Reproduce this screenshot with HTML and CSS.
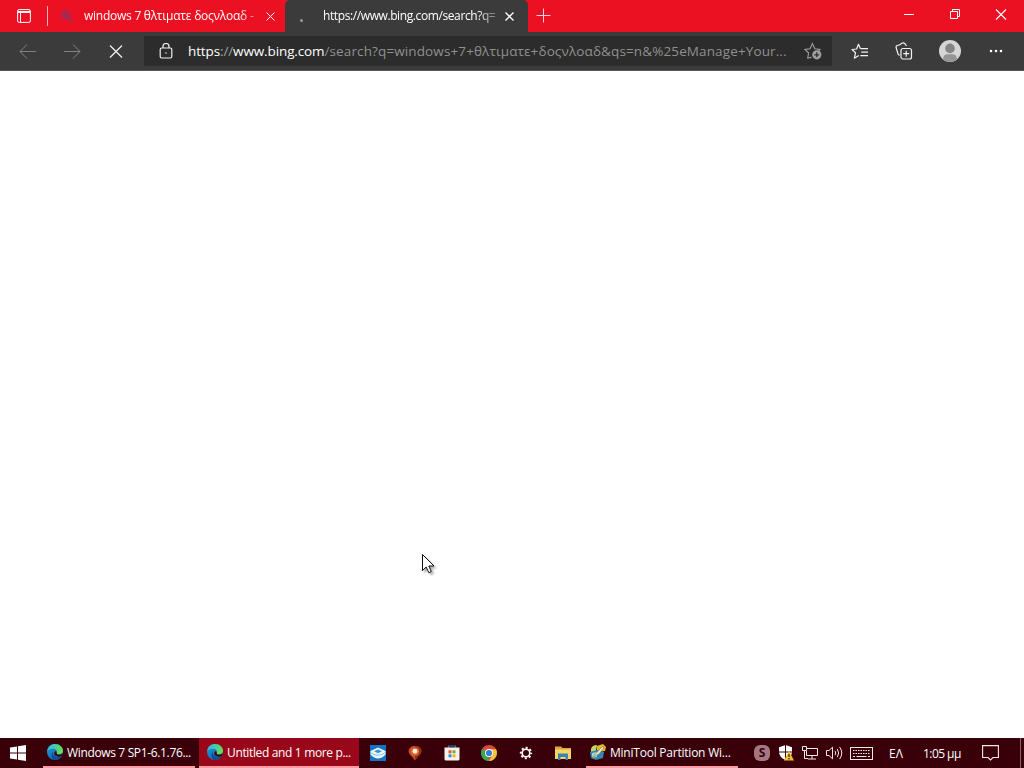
FILE: index.html
```html
<!DOCTYPE html>
<html lang="el">
<head>
  <meta charset="UTF-8" />
  <meta name="viewport" content="width=device-width, initial-scale=1" />
  <title>Untitled</title>
  <link rel="stylesheet" href="styles.css">
</head>
<body>
  <svg class="defs" width="0" height="0">
    <defs>
      <linearGradient id="edgeBlue" x1="0" y1="0" x2="1" y2="1">
        <stop offset="0" stop-color="#1b9de2" />
        <stop offset="1" stop-color="#0c59a4" />
      </linearGradient>
      <linearGradient id="edgeGreen" x1="0" y1="0" x2="1" y2="0.4">
        <stop offset="0" stop-color="#2bb8ec" />
        <stop offset="1" stop-color="#66dc58" />
      </linearGradient>
      <symbol id="edge" viewBox="0 0 16 16">
        <circle cx="8" cy="8" r="8" fill="url(#edgeBlue)" />
        <path d="M0.3 7C1 2.5 4.3 0 8.2 0C13 0 16 3.5 16 6.7C16 9.2 14 10.6 12 10.6C10.4 10.6 9.2 10 9.7 9.2C10.7 7.5 9.5 5 6.4 4.7C3.7 4.4 1.3 5.4 0.3 7Z" fill="url(#edgeGreen)" />
        <path d="M6.2 7.5C5 10 7 13.3 10.3 13.3C12 13.3 13.5 12.8 14.8 12C13 15 10 16 8 16C4.4 15.3 3.1 10.4 6.2 7.5Z" fill="#104a93" />
        <path d="M9.7 9.2C9.2 10 10.4 10.6 12 10.6C13.6 10.6 15 9.8 15.7 8.8L15.2 11.4C13.4 13 10 13.2 8.1 11.5C7 10.3 7 8.5 8 7.4C9.2 7.2 10 8.2 9.7 9.2Z" fill="#3b0610" />
      </symbol>
    </defs>
  </svg>

  <div class="tabs">
    <div class="tab-menu">
      <svg width="14" height="14" viewBox="0 0 14 14" fill="none" stroke="#fff">
        <rect x="0.6" y="0.6" width="12.8" height="12.8" rx="1.5" />
        <path d="M1 2.5H13M1 3.5H13M3.5 4V13" />
      </svg>
    </div>
    <div class="tab">
      <svg class="favicon" width="14" height="14" viewBox="0 0 14 14" fill="none" stroke="#7a3a78" stroke-width="2.2">
        <circle cx="6" cy="6" r="3.5" fill="#a02a50" />
        <path d="M8.5 8.5L12.5 12.5" />
      </svg>
      <span class="tab-title first-title">windows 7 θλτιματε δοςνλοαδ -</span>
      <svg class="tab-close" width="9" height="9" viewBox="0 0 9 9" stroke="#fff"><path d="M0.5 0.5L8.5 8.5M8.5 0.5L0.5 8.5" /></svg>
    </div>
    <div class="tab active">
      <span class="spinner"></span>
      <span class="tab-title second-title">https://www.bing.com/search?q=</span>
      <svg class="tab-close" width="9" height="9" viewBox="0 0 9 9" stroke="#fff" stroke-width="1.3"><path d="M0.5 0.5L8.5 8.5M8.5 0.5L0.5 8.5" /></svg>
    </div>
    <svg class="new-tab" width="15" height="15" viewBox="0 0 15 15" stroke="#ffd5d5"><path d="M0.5 7.5H14.5M7.5 0.5V14.5" /></svg>
    <div class="window-buttons">
      <svg width="46" height="30" viewBox="0 0 46 30" stroke="#fff"><path d="M18 14.5H28" /></svg>
      <svg width="46" height="30" viewBox="0 0 46 30" fill="none" stroke="#fff"><path d="M18.5 11.5H25.5V18.5H18.5ZM20.5 11.5V9.5H27.5V16.5H25.5" /></svg>
      <svg width="46" height="30" viewBox="0 0 46 30" stroke="#fff" stroke-width="1.1"><path d="M18 9.5L28 19.5M28 9.5L18 19.5" /></svg>
    </div>
  </div>

  <div class="toolbar">
    <svg width="44" height="39" viewBox="0 0 44 39" fill="none" stroke="#828282"><path d="M20 19.5H36M27 12.5L20 19.5L27 26.5" /></svg>
    <svg width="44" height="39" viewBox="0 0 44 39" fill="none" stroke="#828282"><path d="M20 19.5H36M29 12.5L36 19.5L29 26.5" /></svg>
    <svg width="56" height="39" viewBox="0 0 56 39" stroke="#f4f4f4" stroke-width="1.2"><path d="M22 13.5L34 25.5M34 13.5L22 25.5" /></svg>
    <div class="address">
      <svg class="lock" width="14" height="16" viewBox="0 0 14 16" fill="none" stroke="#f0f0f0" stroke-width="1.2">
        <rect x="1.2" y="5" width="11.6" height="10" rx="1.5" />
        <path d="M4 5V3.5A3 3 0 0 1 10 3.5V5" />
        <circle cx="7" cy="10" r="0.8" fill="#f0f0f0" stroke="none" />
      </svg>
      <div class="url"><span class="host">https<span class="slashes">://</span>www.bing.com</span><span class="path">/search?q=windows+7+θλτιματε+δοςνλοαδ&amp;qs=n&amp;%25eManage+Your...</span></div>
      <svg class="add-fav" width="18" height="18" viewBox="0 0 18 18" fill="none" stroke="#a0a0a0" stroke-width="1.1">
        <path d="M7.5 15.4L3.7 16L4.6 11L1 7.4L6 6.7L8.4 1.5L10.8 6.7L16 7.4L14.5 9" />
        <circle cx="12.8" cy="12.8" r="4.6" fill="#a0a0a0" stroke="none" />
        <path d="M10.3 12.8H15.3M12.8 10.3V15.3" stroke="#2d2e2d" stroke-width="1.2" />
      </svg>
    </div>
    <div class="tools">
      <svg width="18" height="17" viewBox="0 0 18 17" fill="none" stroke="#f1f1f1" stroke-width="1.2">
        <path d="M9.3 5.5L7.5 1.3L5.6 6L1 6.5L4.5 9.8L3.4 15.2L7.8 12.6" stroke-linejoin="round" />
        <path d="M9.3 5.7H17M10.3 9.2H17M9.3 12.7H17" />
      </svg>
      <svg width="18" height="18" viewBox="0 0 18 18" fill="none" stroke="#f1f1f1" stroke-width="1.2">
        <path d="M4.5 13.5L3 12L1.1 5.5Q0.8 4 2.2 3.5Q5 3.2 7 1.2Q8.5 0.5 10 1.8L11.5 3.8" />
        <rect x="6" y="6.5" width="10.5" height="10.5" rx="2" />
        <path d="M8.3 11.7H14.2M11.2 8.8V14.7" />
      </svg>
      <svg class="avatar" width="22" height="22" viewBox="0 0 22 22">
        <circle cx="11" cy="11" r="11" fill="#d6d6d6" />
        <circle cx="11" cy="8.4" r="4.8" fill="#858585" />
        <path d="M3.8 19.3Q4.5 14.5 8 14.3H14Q17.5 14.5 18.2 19.3Q15 22 11 22T3.8 19.3Z" fill="#969696" />
      </svg>
      <svg width="14" height="4" viewBox="0 0 14 4" fill="#fff"><circle cx="2" cy="2" r="1.3" /><circle cx="7" cy="2" r="1.3" /><circle cx="12" cy="2" r="1.3" /></svg>
    </div>
  </div>

  <div class="page"></div>

  <div class="taskbar">
    <div class="start">
      <svg width="17" height="16" viewBox="0 0 17 16" fill="#fff"><path d="M0 2.4L7 1.4V7.4H0ZM8 1.2L16 0V7.4H8ZM0 8.4H7V14.5L0 13.5ZM8 8.4H16V16L8 14.7Z" /></svg>
    </div>
    <div class="task windows-task">
      <svg width="16" height="16"><use href="#edge" /></svg>
      <span>Windows 7 SP1-6.1.76...</span>
    </div>
    <div class="task current">
      <svg width="16" height="16"><use href="#edge" /></svg>
      <span>Untitled and 1 more p...</span>
    </div>
    <div class="pinned">
      <svg width="16" height="16" viewBox="0 0 16 16">
        <path d="M0 0H16V16H0Z" fill="#1674c5" />
        <path d="M0.5 6L8 2.5L15.5 6V9.5Q12 13.5 8 13.5T0.5 9.5Z" fill="#e9f8ff" />
        <path d="M4 6.3L8 4.5L12 6.3L8 8.3Z" fill="#3c91ce" />
        <path d="M0.5 7.5Q8 13 15.5 7.5" fill="none" stroke="#6fb2df" stroke-width="0.8" />
      </svg>
      <svg width="16" height="16" viewBox="0 0 16 16">
        <path d="M8 1C4.3 1 1.6 3 1.6 6.2C1.6 9.6 6 11.5 8 15.5C10 11.5 14.4 9.6 14.4 6.2C14.4 3 11.7 1 8 1Z" fill="#c84b28" />
        <path d="M8 1C11.7 1 14.4 3 14.4 6.2C14.4 9.6 10 11.5 8 15.5Z" fill="#943018" />
        <circle cx="8" cy="6.5" r="4" fill="#e46b32" />
        <circle cx="8" cy="6.2" r="2.4" fill="#fff2e5" />
      </svg>
      <svg width="16" height="16" viewBox="0 0 16 16">
        <path d="M4.5 3V1H11.5V3" fill="none" stroke="#257d91" stroke-width="1.2" />
        <path d="M0.5 2.5H15.5V14Q15.5 15.5 14 15.5H2Q0.5 15.5 0.5 14Z" fill="#f7f1ee" />
        <path d="M4.5 5.3H7.5V8.3H4.5Z" fill="#e7572e" /><path d="M8.5 5.3H11.5V8.3H8.5Z" fill="#6caf32" />
        <path d="M4.5 9.3H7.5V12.3H4.5Z" fill="#2095d5" /><path d="M8.5 9.3H11.5V12.3H8.5Z" fill="#edb52d" />
      </svg>
      <svg width="16" height="16" viewBox="0 0 16 16">
        <circle cx="8" cy="8" r="8" fill="#da4938" />
        <path d="M1.1 4L8 8L8 16A8 8 0 0 1 1.1 4Z" fill="#37a852" />
        <path d="M8 4.2H15A8 8 0 0 1 8 16L11.4 10Z" fill="#f4c437" />
        <circle cx="8" cy="8" r="4" fill="#fff" /><circle cx="8" cy="8" r="3.1" fill="#3979d8" />
      </svg>
      <svg width="16" height="16" viewBox="0 0 16 16" fill="none" stroke="#fff">
        <circle cx="8" cy="8" r="3.8" stroke-width="1.6" />
        <circle cx="8" cy="8" r="5.2" stroke-width="2" stroke-dasharray="2 2.084" stroke-dashoffset="1" />
      </svg>
      <svg width="16" height="16" viewBox="0 0 16 16">
        <path d="M0 1.5H6L7.5 3H16V14H0Z" fill="#dba83a" />
        <path d="M0 4.5H16V14H0Z" fill="#f7d36d" />
        <path d="M3 8.5H13V15H10.5V12H5.5V15H3Z" fill="#3983ae" />
      </svg>
    </div>
    <div class="task mini-task">
      <svg width="16" height="16" viewBox="0 0 16 16">
        <path d="M1 5Q2 1 7 1L6 7L1 9Z" fill="#c3d768" />
        <path d="M7 2L13 0L16 3L15 7L7 8Z" fill="#e5b927" />
        <path d="M0 8L7 6L14 8L13 14L6 16L1 14Z" fill="#3584b1" />
        <path d="M2 9L7 8V13L2 14Z" fill="#a7d5da" />
        <path d="M2 14L9 6L13 2L14 4L9 10Z" fill="#e5ead2" stroke="#6a7830" stroke-width="0.6" />
      </svg>
      <span>MiniTool Partition Wi...</span>
    </div>
    <div class="tray">
      <span class="skype">S</span>
      <svg class="shield" width="16" height="16" viewBox="0 0 16 16">
        <path d="M7.5 0L14 2.2V7Q14 12 7.5 15Q1 12 1 7V2.2Z" fill="#fff" />
        <path d="M7.5 0V15M1 7H14" stroke="#3a0009" />
        <path d="M11 6L16 15.5H6Z" fill="#f1bd36" />
        <path d="M11 9V12M11 13V14.5" stroke="#422505" stroke-width="1.2" />
      </svg>
      <svg class="network" width="16" height="14" viewBox="0 0 16 14" fill="none" stroke="#f7e8e8">
        <path d="M5 2.5H15.5V9.5H4.5V5M10 10V13M6 13H14" />
        <path d="M0.5 0.5H4.5V4.5H0.5ZM2.5 5V12.5H6" />
      </svg>
      <svg class="sound" width="17" height="14" viewBox="0 0 17 14" fill="none" stroke="#f7e8e8">
        <path d="M0.5 4.5H3L6.5 1.2V12.8L3 9.5H0.5Z" />
        <path d="M9 4.8Q10.5 7 9 9.2M11.3 3Q14 7 11.3 11M13.6 1Q18 7 13.6 13" />
      </svg>
      <svg class="keyboard" width="23" height="13" viewBox="0 0 23 13" fill="none" stroke="#f7e8e8">
        <rect x="0.5" y="0.5" width="22" height="12" />
        <path d="M3 3.5H20M3 6.5H20" stroke-dasharray="1.5 1" />
        <path d="M3 9.5H5M6.5 9.5H16.5M18 9.5H20" />
      </svg>
      <span class="language">ΕΛ</span>
      <span class="clock">1:05 μμ</span>
      <svg class="notice" width="17" height="16" viewBox="0 0 17 16" fill="none" stroke="#f7e8e8" stroke-width="1.1"><path d="M0.6 0.6H16.4V12.5H11L8.5 15L6 12.5H0.6Z" /></svg>
      <span class="show-desktop"></span>
    </div>
  </div>

  <svg class="cursor" width="16" height="22" viewBox="0 0 16 22">
    <path d="M0.5 0.5V16.5L4.2 13L6.8 18.7L9.3 17.5L6.8 12H12Z" fill="#fff" stroke="#111" />
  </svg>
</body>
</html>
```
FILE: styles.css
```css
* {
  box-sizing: border-box;
}
body {
  margin: 0;
  height: 768px;
  overflow: hidden;
  display: flex;
  flex-direction: column;
  background: #fff;
  font-family: "Open Sans", "Noto Sans", sans-serif;
  font-size: 12px;
  color: #fff;
}
svg {
  flex: none;
  display: block;
}
.defs {
  position: absolute;
}
.tabs {
  height: 32px;
  flex: none;
  display: flex;
  background: #eb1022;
}
.tab-menu {
  width: 48px;
  height: 20px;
  margin-top: 6px;
  padding: 3px 0 0 17px;
  border-right: 1px solid #ffb0b0;
}
.tab {
  width: 237px;
  height: 32px;
  display: flex;
  align-items: center;
  padding-left: 12px;
}
.active {
  width: 243px;
  padding-left: 15px;
  background: #3b3b3b;
  border-radius: 5px 5px 0 0;
}
.favicon {
  opacity: 0.7;
}
.tab-title {
  white-space: nowrap;
  line-height: 20px;
}
.first-title {
  width: 172px;
  margin-left: 10px;
  margin-right: 10px;
  letter-spacing: -0.25px;
  -webkit-mask-image: linear-gradient(to right, #000 155px, #0006 172px);
  mask-image: linear-gradient(to right, #000 155px, #0006 172px);
}
.second-title {
  width: 173px;
  margin-left: 20px;
  margin-right: 9px;
  letter-spacing: -0.4px;
  -webkit-mask-image: linear-gradient(to right, #000 155px, #0004 173px);
  mask-image: linear-gradient(to right, #000 155px, #0004 173px);
}
.spinner {
  width: 3px;
  height: 3px;
  margin-top: 9px;
  border-radius: 50%;
  background: #999;
}
.new-tab {
  margin: 8px 0 0 8px;
}
.window-buttons {
  display: flex;
  margin-left: auto;
}
.toolbar {
  height: 39px;
  flex: none;
  display: flex;
  background: #3b3b3b;
  border-bottom: 1px solid #555;
}
.address {
  width: 688px;
  height: 30px;
  margin-top: 4px;
  display: flex;
  align-items: center;
  background: #2b2c2b;
}
.lock {
  margin-left: 15px;
}
.url {
  width: 602px;
  margin-left: 15px;
  font-size: 13.5px;
  line-height: 20px;
  white-space: nowrap;
}
.host {
  letter-spacing: -0.12px;
}
.slashes {
  color: #a0a0a0;
}
.path {
  color: #909090;
  letter-spacing: 0.12px;
}
.add-fav {
  margin-left: 14px;
}
.tools {
  display: flex;
  align-items: center;
  padding-left: 19px;
}
.tools svg:nth-child(2) {
  margin-left: 26px;
}
.avatar {
  margin-left: 26px;
}
.tools svg:last-child {
  margin-left: 28px;
}
.page {
  flex: 1;
}
.taskbar {
  height: 30px;
  flex: none;
  display: flex;
  background: #3a0009;
}
.start {
  width: 43px;
  padding: 7px 0 0 10px;
}
.task {
  width: 152px;
  display: flex;
  align-items: center;
  padding-left: 4px;
  border-bottom: 2px solid #ff9ba3;
  letter-spacing: -0.35px;
  white-space: nowrap;
}
.task span {
  margin-left: 4px;
}
.current {
  width: 160px;
  margin-left: 4px;
  padding-left: 8px;
  background: #99071a;
}
.mini-task {
  letter-spacing: -0.23px;
}
.pinned {
  width: 227px;
  display: flex;
  align-items: center;
  gap: 21px;
  padding-left: 11px;
}
.tray {
  flex: 1;
  display: flex;
  align-items: center;
}
.skype {
  width: 16px;
  height: 16px;
  margin-left: 16px;
  border-radius: 6px;
  background: #a67780;
  color: #3a0009;
  font-weight: bold;
  line-height: 16px;
  text-align: center;
}
.shield {
  margin-left: 8px;
}
.network {
  margin-left: 8px;
}
.sound {
  margin-left: 8px;
}
.keyboard {
  margin-left: 7px;
}
.language {
  width: 18px;
  margin-left: 16px;
}
.clock {
  width: 42px;
  margin-left: 16px;
  letter-spacing: -0.55px;
  white-space: nowrap;
}
.notice {
  margin-left: 17px;
}
.show-desktop {
  height: 30px;
  margin-left: auto;
  margin-right: 3px;
  border-left: 1px solid #8f6067;
}
.cursor {
  position: absolute;
  left: 422px;
  top: 554px;
  filter: drop-shadow(2px 2px 1px #0005);
}
```
